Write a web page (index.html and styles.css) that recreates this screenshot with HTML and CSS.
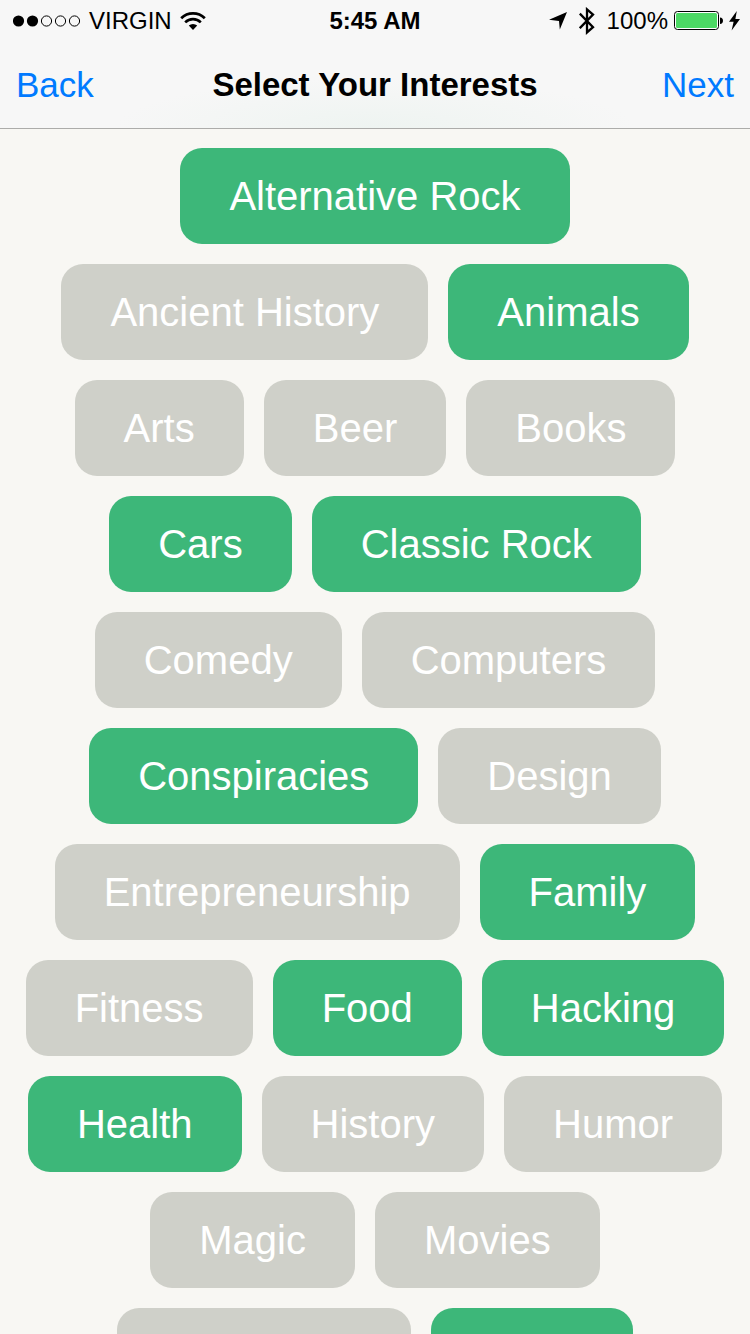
FILE: index.html
```
<!DOCTYPE html>
<html lang="en">
<head>
    <meta charset="UTF-8">
    <meta name="viewport" content="width=device-width, initial-scale=1.0">
    <title>Select Your Interests</title>
    <link rel="stylesheet" href="styles.css">
</head>
<body>
    <header class="header">
        <div class="status-bar">
            <div class="status-left">
                <svg class="signal" width="68" height="12" viewBox="0 0 68 12" aria-hidden="true">
                    <circle cx="5.5" cy="6" r="5.6"/>
                    <circle cx="19.5" cy="6" r="5.6"/>
                    <circle cx="33.5" cy="6" r="5.1" fill="none" stroke="#000"/>
                    <circle cx="47.5" cy="6" r="5.1" fill="none" stroke="#000"/>
                    <circle cx="61.5" cy="6" r="5.1" fill="none" stroke="#000"/>
                </svg>
                <span class="carrier">VIRGIN</span>
                <svg width="26" height="18" viewBox="0 0 26 18" aria-hidden="true">
                    <path d="M1.2 6.2a17 17 0 0 1 23.6 0" fill="none" stroke="#000" stroke-width="2.8"/>
                    <path d="M5.2 10.4a11 11 0 0 1 15.6 0" fill="none" stroke="#000" stroke-width="2.6"/>
                    <path d="M13 18l-4.2-4.4a6 6 0 0 1 8.4 0z"/>
                </svg>
            </div>
            <div class="clock">5:45 AM</div>
            <div class="status-right">
                <svg width="18" height="18" viewBox="0 0 18 18" aria-hidden="true">
                    <path d="M18 0L10.8 17.6l-.8-8.6L0 7.8z"/>
                </svg>
                <svg class="bluetooth" width="16" height="28" viewBox="0 0 16 28" aria-hidden="true">
                    <path d="M.8 6.6l13.2 13.6-6 5.2V2.4l6 5.2L.8 21.2" fill="none" stroke="#000" stroke-width="2.3"/>
                </svg>
                <span class="percent">100%</span>
                <svg class="battery" width="49" height="20" viewBox="0 0 49 20" aria-hidden="true">
                    <rect x=".5" y=".5" width="44" height="18" rx="3" fill="#fff" stroke="#000"/>
                    <rect x="2" y="2" width="41" height="15" rx="1.5" fill="#4cd964"/>
                    <path d="M46 6.5c4 0 4 6.5 0 6.5z"/>
                </svg>
                <svg width="11" height="20" viewBox="0 0 11 20" aria-hidden="true">
                    <path d="M7.8 0L0 10.8h4.6L2.6 19.5 11 8H6.4z"/>
                </svg>
            </div>
        </div>
        <nav class="nav-bar">
            <button type="button" class="nav-btn nav-back">Back</button>
            <h1 class="title">Select Your Interests</h1>
            <button type="button" class="nav-btn nav-next">Next</button>
        </nav>
    </header>

    <main class="tags">
        <button type="button" class="tag" aria-pressed="true">Alternative Rock</button>
        <button type="button" class="tag" aria-pressed="false">Ancient History</button>
        <button type="button" class="tag" aria-pressed="true">Animals</button>
        <button type="button" class="tag" aria-pressed="false">Arts</button>
        <button type="button" class="tag" aria-pressed="false">Beer</button>
        <button type="button" class="tag" aria-pressed="false">Books</button>
        <button type="button" class="tag" aria-pressed="true">Cars</button>
        <button type="button" class="tag" aria-pressed="true">Classic Rock</button>
        <button type="button" class="tag" aria-pressed="false">Comedy</button>
        <button type="button" class="tag" aria-pressed="false">Computers</button>
        <button type="button" class="tag" aria-pressed="true">Conspiracies</button>
        <button type="button" class="tag" aria-pressed="false">Design</button>
        <button type="button" class="tag" aria-pressed="false">Entrepreneurship</button>
        <button type="button" class="tag" aria-pressed="true">Family</button>
        <button type="button" class="tag" aria-pressed="false">Fitness</button>
        <button type="button" class="tag" aria-pressed="true">Food</button>
        <button type="button" class="tag" aria-pressed="true">Hacking</button>
        <button type="button" class="tag" aria-pressed="true">Health</button>
        <button type="button" class="tag" aria-pressed="false">History</button>
        <button type="button" class="tag" aria-pressed="false">Humor</button>
        <button type="button" class="tag" aria-pressed="false">Magic</button>
        <button type="button" class="tag" aria-pressed="false">Movies</button>
        <button type="button" class="tag" aria-pressed="false">Philosophy</button>
        <button type="button" class="tag" aria-pressed="true">Poker</button>
    </main>

    <script>
        document.querySelectorAll('.tag').forEach(function (tag) {
            tag.addEventListener('click', function () {
                const on = tag.getAttribute('aria-pressed') === 'true';
                tag.setAttribute('aria-pressed', String(!on));
            });
        });
    </script>
</body>
</html>
```
FILE: styles.css
```
* {
    box-sizing: border-box;
}
body {
    margin: 0;
    height: 100vh;
    display: flex;
    flex-direction: column;
    background-color: #f8f7f3;
    font-family: "Helvetica Neue", "Liberation Sans", Arial, sans-serif;
    color: #000;
}
button {
    border: none;
    font-family: inherit;
    cursor: pointer;
}
.header {
    flex: none;
    background: radial-gradient(ellipse 260px 50px at 50% 100%, #eef4f1, #f7f7f7);
    border-bottom: 1px solid #acacaa;
}
.status-bar {
    display: grid;
    grid-template-columns: 1fr auto 1fr;
    align-items: center;
    height: 42px;
    padding: 0 10px;
    font-size: 24px;
    line-height: 42px;
}
.status-left,
.status-right {
    display: flex;
    align-items: center;
}
.status-left {
    gap: 8px;
}
.signal {
    margin-left: 3px;
}
.clock {
    font-weight: bold;
}
.status-right {
    justify-content: flex-end;
    gap: 6px;
}
.bluetooth {
    margin: 0 6px;
}
.nav-bar {
    display: grid;
    grid-template-columns: 1fr auto 1fr;
    align-items: center;
    height: 86px;
    padding: 0 16px;
}
.nav-btn {
    padding: 0;
    background: none;
    color: #007aff;
    font-size: 35px;
    line-height: 86px;
}
.nav-back {
    justify-self: start;
}
.nav-next {
    justify-self: end;
}
.title {
    margin: 0;
    font-size: 33px;
    font-weight: bold;
}
.tags {
    flex: 1;
    min-height: 0;
    overflow-y: auto;
    scrollbar-width: none;
    display: flex;
    flex-wrap: wrap;
    justify-content: center;
    align-content: flex-start;
    gap: 20px;
    padding: 19px 20px;
}
.tag {
    height: 96px;
    padding: 0 49px;
    border-radius: 22px;
    background-color: #cfd0c9;
    color: #fff;
    font-size: 40px;
    line-height: 96px;
}
.tag[aria-pressed="true"] {
    background-color: #3db779;
}
```
